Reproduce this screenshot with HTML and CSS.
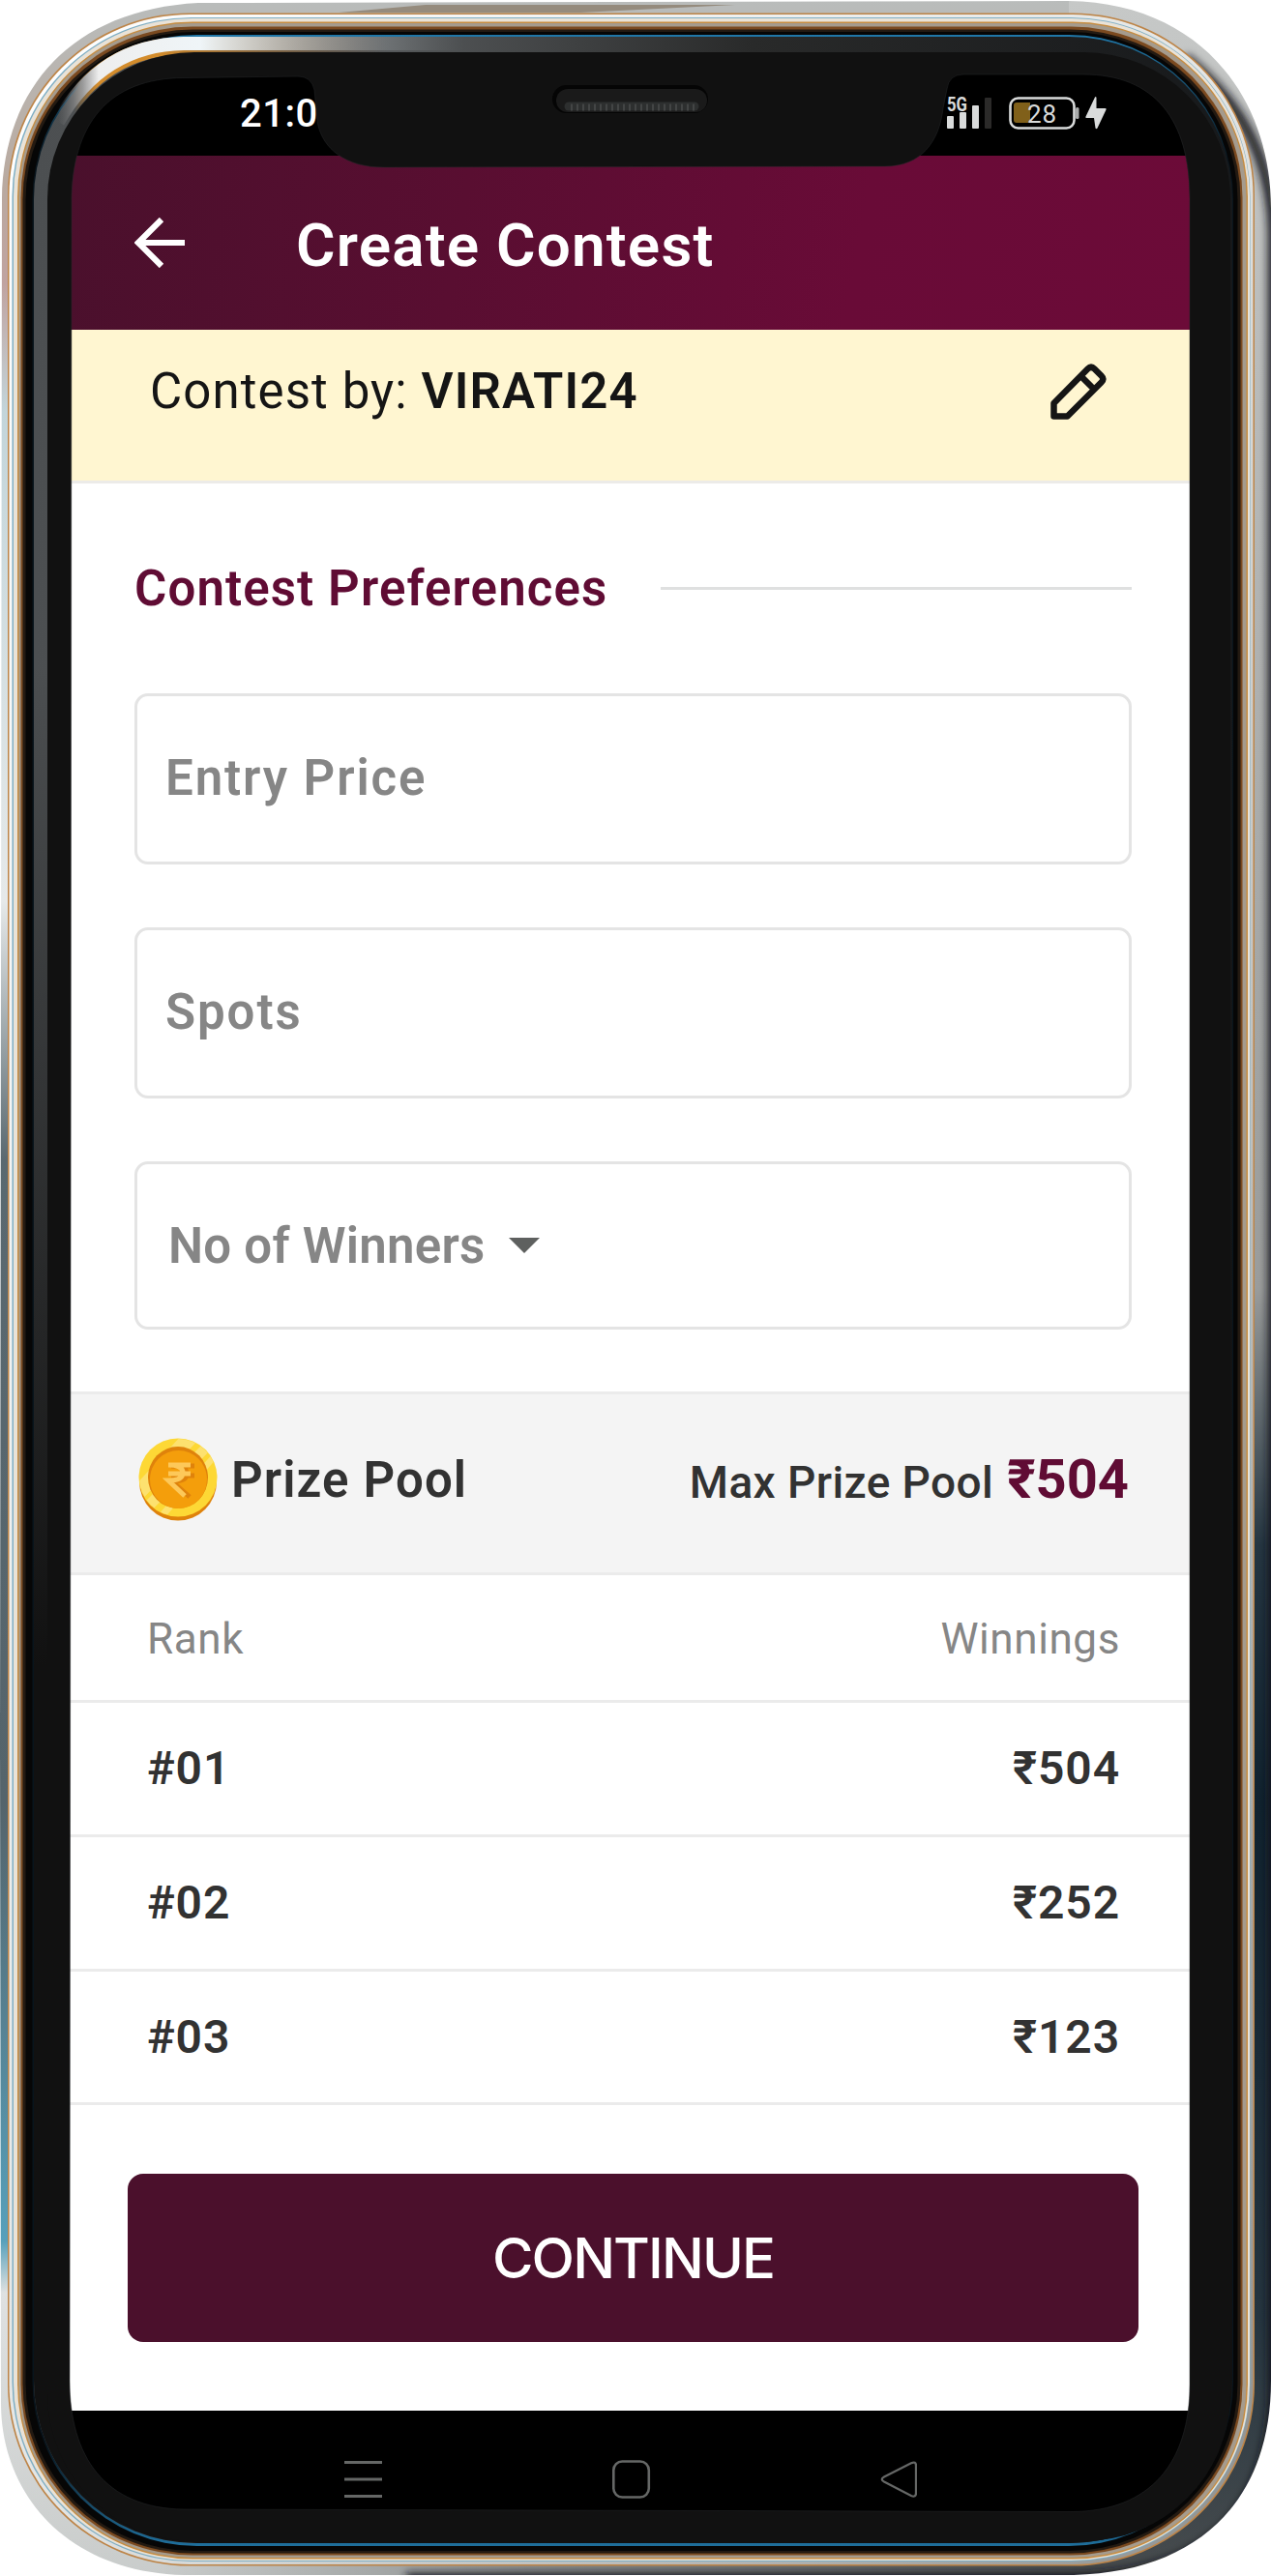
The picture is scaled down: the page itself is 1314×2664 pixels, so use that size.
FILE: index.html
```html
<!DOCTYPE html>
<html lang="en">
<head>
<meta charset="utf-8">
<title>Create Contest</title>
<link rel="stylesheet" href="styles.css">
</head>
<body>
<div class="phone">
  <main class="screen">
    <div class="status">
      <span class="clock">21:0</span>
      <div class="status-icons">
        <svg class="signal" width="48" height="38" viewBox="0 0 48 38">
          <text class="net" x="2" y="17" textLength="21" lengthAdjust="spacingAndGlyphs">5G</text>
          <g fill="#d9dbdb"><rect x="2" y="22" width="7" height="13" rx="1"/><rect x="15" y="18" width="7" height="17" rx="1"/><rect x="28" y="11" width="7" height="24" rx="1"/></g>
          <rect x="41" y="3" width="7" height="32" rx="1" fill="#2b2a29"/>
        </svg>
        <svg class="battery" width="74" height="34" viewBox="0 0 74 34">
          <rect x="1.500" y="1.500" width="66" height="31" rx="8" fill="none" stroke="#d9dbdb" stroke-width="2.600"/>
          <path d="M8 6h14v21H8a3 3 0 0 1-3-3V9a3 3 0 0 1 3-3z" fill="#80601a"/>
          <rect x="69" y="11" width="3.500" height="12" rx="1.500" fill="#a9abab"/>
          <text class="charge" x="19" y="26.500" textLength="30">28</text>
        </svg>
        <svg class="bolt" width="22" height="34" viewBox="0 0 22 34"><path d="M10 0.500 0.500 20.500Q0 22 1.500 22H9L10.500 32.500Q11.500 34 12.500 32.500L21.500 13.500Q22 12 20.500 12H11.500V1Q11-.5 10 .5z" fill="#d9dbdb"/></svg>
      </div>
    </div>
    <header class="appbar">
      <svg class="back" width="52" height="52" viewBox="0 0 52 52"><path d="M52 26H4M28 2 4 26l24 24" fill="none" stroke="#fff" stroke-width="6.200"/></svg>
      <h1 class="title">Create Contest</h1>
    </header>
    <section class="owner">
      <p class="owner-name">Contest by: <b>VIRATI24</b></p>
      <svg class="edit" width="58" height="58" viewBox="0 0 58 58"><path d="M3.500 54.500V41L38.500 5.500Q42 2 45.500 5.500L52.500 12.500Q56 16 52.500 19.500L17.500 54.500zM31.500 13 45 26.500" fill="none" stroke="#151515" stroke-width="6.500" stroke-linejoin="round"/></svg>
    </section>
    <section class="prefs">
      <h2 class="prefs-title">Contest Preferences</h2>
      <div class="field entry">Entry Price</div>
      <div class="field spots">Spots</div>
      <div class="field winners"><span>No of Winners</span><svg width="32" height="16" viewBox="0 0 32 16"><path d="M0 0h32L16 16z" fill="#5e605f"/></svg></div>
    </section>
    <section class="pool">
      <svg class="coin" width="82" height="86" viewBox="0 0 82 86">
        <defs><clipPath id="face"><circle cx="41" cy="41" r="40"/></clipPath></defs>
        <ellipse cx="41" cy="45" rx="40" ry="40.500" fill="#df820b"/>
        <circle cx="41" cy="41" r="40.500" fill="#fdd835"/>
        <g clip-path="url(#face)" fill="#fde16f"><path d="M46-4 64 0-2 70-6 52zM70 3 77 10 8 81 0 73z"/><path d="M79 14 83 19 26 84 20 80z"/></g>
        <ellipse cx="41" cy="41" rx="31" ry="32" fill="#df820b"/>
        <ellipse cx="41.500" cy="43" rx="29.500" ry="30" fill="#f49e0b"/>
        <g fill="none" stroke-width="5"><path d="M34 29h24M34 39h24M35 29q15 0 15 8 0 8-15 8L53 61" stroke="#df820b"/><path d="M31 28h23M31 37h23M31 28q15 0 15 8 0 8-15 8L48 60" stroke="#fdc859"/></g>
      </svg>
      <h2 class="pool-title">Prize Pool</h2>
      <p class="pool-max"><span class="pool-label">Max Prize Pool</span><b class="pool-sum">₹504</b></p>
    </section>
    <section class="ranks">
      <div class="row head"><span>Rank</span><span class="head-win">Winnings</span></div>
      <div class="row"><span>#01</span><span>₹504</span></div>
      <div class="row"><span>#02</span><span>₹252</span></div>
      <div class="row"><span>#03</span><span>₹123</span></div>
    </section>
    <div class="actions"><button class="continue" type="button">CONTINUE</button></div>
    <nav class="sysnav">
      <svg width="592" height="40" viewBox="0 0 592 40" fill="none" stroke="#656766">
        <path d="M0 2.500h39M0 20h39M0 37.500h39" stroke-width="3.200"/>
        <rect x="278.300" y="1.500" width="36.500" height="37" rx="9" stroke-width="2.600"/>
        <path d="M558 17.500 586 3.200Q591 1 591 6V34Q591 39 586 37L558 22.500Q553.500 20 558 17.500z" stroke-width="2.300"/>
      </svg>
    </nav>
  </main>
  <svg class="frame" width="1314" height="2664" viewBox="0 0 1314 2664">
    <defs>
      <path id="glass" d="M74 210C74 128 112 81 190 80.500L308 79Q322 79 325 93L328.500 128C334 154 357 173 397 173L915 172C952 172 971 147 975 112L979 92Q981 77 996 77L1120 77C1194 77 1230 124 1230 205V2466C1230 2546 1190 2597 1108 2597.500L190 2595C108 2594 72 2540 72 2462z"/>
      <mask id="hole" maskUnits="userSpaceOnUse" x="0" y="0" width="1314" height="2664"><rect width="1314" height="2664" fill="#fff"/><use href="#glass" fill="#000"/></mask>
      <mask id="body" maskUnits="userSpaceOnUse" x="0" y="0" width="1314" height="2664"><path d="M205 3 870 1.500 1105 1C1240 3 1314 100 1314 215V2462C1314 2585 1240 2660 1110 2663H190C70 2660 1 2580 1 2485L0 1800 2 205C4 90 75 10 205 3z" fill="#fff"/></mask>
      <filter id="soft" filterUnits="userSpaceOnUse" x="0" y="0" width="1400" height="2700"><feGaussianBlur stdDeviation="4"/></filter>
      <linearGradient id="shell" x1="0" y1="0" x2="0" y2="1"><stop offset="0" stop-color="#b9bcbb"/><stop offset=".07" stop-color="#b9aaa0"/><stop offset=".11" stop-color="#c0a3a0"/><stop offset=".16" stop-color="#c3d5da"/><stop offset=".35" stop-color="#e6e9e9"/><stop offset=".45" stop-color="#5a6970"/><stop offset=".7" stop-color="#55646b"/><stop offset=".87" stop-color="#57a0bb"/><stop offset=".89" stop-color="#dfe1e1"/><stop offset="1" stop-color="#c9cccb"/></linearGradient>
      <linearGradient id="right" x1="0" y1="0" x2="0" y2="2664" gradientUnits="userSpaceOnUse"><stop offset="0" stop-color="#c6c8c7"/><stop offset=".5" stop-color="#9a9c9b"/><stop offset=".6" stop-color="#253642"/><stop offset=".7" stop-color="#10222f"/><stop offset=".9" stop-color="#253540"/><stop offset="1" stop-color="#484c4e"/></linearGradient>
      <linearGradient id="bottom" x1="0" x2="1" y1="0" y2="0"><stop offset="0" stop-color="#c9cccb"/><stop offset=".4" stop-color="#8b8e8e"/><stop offset="1" stop-color="#484c4e"/></linearGradient>
      <linearGradient id="rim" x1="0" y1="0" x2="1" y2="1"><stop offset="0" stop-color="#fff"/><stop offset=".5" stop-color="#e3e5e4"/><stop offset="1" stop-color="#8f9190"/></linearGradient>
      <linearGradient id="inner" x1="0" x2="1" y1="0" y2="0"><stop offset="0" stop-color="#4c4f51"/><stop offset=".3" stop-color="#55585a"/><stop offset=".6" stop-color="#292a2a"/><stop offset="1" stop-color="#17191b"/></linearGradient>
      <linearGradient id="fadeDown" x1="0" x2="0" y1="0" y2="1"><stop offset=".25" stop-color="#111" stop-opacity="0"/><stop offset=".65" stop-color="#111"/></linearGradient>
      <linearGradient id="blue" x1="0" x2="0" y1="0" y2="1"><stop offset="0" stop-color="#2077a8"/><stop offset=".05" stop-color="#08141c"/><stop offset=".96" stop-color="#08141c"/><stop offset="1" stop-color="#1f6f9c"/></linearGradient>
      <linearGradient id="arc" x1="60" x2="480" y1="0" y2="0" gradientUnits="userSpaceOnUse"><stop offset="0" stop-color="#777" stop-opacity="0"/><stop offset=".06" stop-color="#999"/><stop offset=".1" stop-color="#eee"/><stop offset=".35" stop-color="#eff5f8"/><stop offset="1" stop-color="#8a9093" stop-opacity="0"/></linearGradient>
      <linearGradient id="amber" x1="60" x2="400" y1="0" y2="0" gradientUnits="userSpaceOnUse"><stop offset=".05" stop-color="#d38c2c" stop-opacity="0"/><stop offset=".12" stop-color="#d38c2c"/><stop offset=".3" stop-color="#d38c2c"/><stop offset="1" stop-color="#8a5c30" stop-opacity="0"/></linearGradient>
    </defs>
    <g mask="url(#hole)"><g mask="url(#body)">
      <rect width="1314" height="2664" fill="url(#shell)"/>
      <path d="M1105 0H1314V2664H1105z" fill="url(#right)"/>
      <rect x="170" y="2640" width="940" height="24" fill="url(#bottom)"/>
      <path d="M1225 60Q1314 130 1316 240V2480Q1310 2664 1110 2666H420" fill="none" stroke="#16191b" stroke-width="10" filter="url(#soft)"/>
      <path d="M440 5H760L600 13H350z" fill="#958b7d"/>
      <rect x="8" y="13.500" width="1289" height="2640" rx="188" fill="#bd8447"/>
      <rect x="9.500" y="15" width="1286" height="2637" rx="187" fill="url(#rim)"/>
      <rect x="12.500" y="18" width="1280" height="2631" rx="185" fill="#7eaec4"/>
      <rect x="14" y="19" width="1278" height="2629" rx="184" fill="#e9e2d7"/>
      <rect x="18" y="22.500" width="1272" height="2624" rx="181" fill="#c68c40"/>
      <rect x="19.500" y="24" width="1269" height="2621" rx="179" fill="#a59b8d"/>
      <rect x="21.500" y="27.500" width="1263" height="2615" rx="177" fill="#7b4a20"/>
      <rect x="23.500" y="30.500" width="1259" height="2610" rx="176" fill="#231a12"/>
      <rect x="26.500" y="33" width="1253" height="2605" rx="174" fill="#060606"/>
      <rect x="33.500" y="36" width="1241.500" height="2597" rx="170" fill="url(#blue)"/>
      <rect x="35" y="38" width="1239" height="2592" rx="168" fill="url(#inner)"/>
      <rect x="35" y="38" width="1239" height="2592" rx="168" fill="url(#fadeDown)"/>
      <path d="M60 128C85 84 125 48 190 47.500H480" fill="none" stroke="url(#amber)" stroke-width="18"/>
      <path d="M60 126C85 82 125 46 190 45H480" fill="none" stroke="url(#arc)" stroke-width="14"/>
      <rect x="49" y="54" width="1223" height="2574" rx="152" fill="#111"/>
      <rect x="571" y="88" width="161" height="29" rx="14.500" fill="#050505"/>
      <rect x="575" y="92" width="156" height="24" rx="12" fill="#1a1a1a"/>
      <path d="M588 110H718" stroke="#2d2f2f" stroke-width="9" stroke-linecap="round"/>
      <path d="M590 111H720" stroke="#434545" stroke-width="7" stroke-dasharray="2 4"/>
    </g></g>
    <use href="#glass" fill="none" stroke="#25282a" stroke-width="1" opacity=".5"/>
  </svg>
</div>
</body>
</html>
```
FILE: styles.css
```css
* { box-sizing: border-box; margin: 0; }
body { width: 1314px; background: #fff; font-family: Roboto, "Liberation Sans", sans-serif; overflow: hidden; }
.phone { position: relative; width: 1314px; height: 2664px; padding: 74px 84px 64px 72px; }
.frame { position: absolute; inset: 0; pointer-events: none; }
.screen { width: 1158px; height: 2526px; background: #fff; display: flex; flex-direction: column; }

.status { height: 87px; background: #000; display: flex; align-items: flex-start; justify-content: space-between; padding: 24px 86px 0 176px; }
.clock { color: #fff; font-size: 40px; font-weight: 500; line-height: 40px; letter-spacing: .5px; }
.status-icons { display: flex; align-items: flex-start; }
.signal { overflow: visible; }
.net { font: 700 21px Roboto, sans-serif; fill: #d9dbdb; }
.charge { font: 400 26px Roboto, sans-serif; fill: #d9dbdb; }
.battery { margin: 2px 0 0 18px; }
.bolt { margin: 2px 0 0 5px; }

.appbar { height: 180px; background: linear-gradient(100deg, #4a102c 0%, #590e31 35%, #690b37 70%, #6c0b38 100%); display: flex; align-items: center; padding-left: 67px; }
.title { color: #fff; font-size: 62px; font-weight: 600; line-height: 72px; letter-spacing: 1.2px; margin: 6px 0 0 115px; }

.owner { height: 159px; background: #fff6d1; border-bottom: 3px solid #ecebe8; display: flex; align-items: center; justify-content: space-between; padding: 0 86px 29px 83px; }
.owner-name { font-size: 51px; color: #151515; letter-spacing: 1.1px; white-space: nowrap; }
.owner-name b { font-weight: 600; }

.prefs { padding: 75px 60px 0 67px; height: 939px; }
.prefs-title { height: 67px; display: flex; align-items: center; gap: 55px; color: #600c34; font-size: 51px; font-weight: 600; letter-spacing: 1.1px; white-space: nowrap; }
.prefs-title::after { content: ""; flex: 1; height: 3px; background: #dfe0e0; }
.field { height: 177px; border: 3px solid #e4e4e4; border-radius: 14px; margin-bottom: 65px; display: flex; align-items: center; padding: 0 0 2px 29px; color: #868686; font-size: 51px; font-weight: 600; letter-spacing: 1.9px; }
.entry { margin-top: 75px; }
.winners { height: 174px; padding: 0 0 0 32px; gap: 24px; letter-spacing: .25px; }

.pool { height: 190px; background: #f4f4f4; border-top: 3px solid #ebebeb; border-bottom: 3px solid #ebebeb; display: flex; align-items: center; padding: 0 63px 8px 71px; color: #323232; }
.pool-title { font-size: 51px; font-weight: 600; margin-left: 14px; letter-spacing: 1.1px; }
.pool-max { display: flex; align-items: baseline; gap: 14px; margin-left: auto; }
.pool-label { font-size: 46px; font-weight: 500; letter-spacing: .4px; }
.pool-sum { font-size: 56px; font-weight: 700; color: #600c34; }

.row { height: 138.800px; border-bottom: 3px solid #ebebeb; display: flex; align-items: center; justify-content: space-between; padding: 0 72px 0 80px; font-size: 48px; font-weight: 600; color: #323232; letter-spacing: .9px; }
.head { height: 132px; padding-top: 2px; font-size: 44px; font-weight: 400; color: #868686; letter-spacing: .6px; }

.actions { padding: 70.600px 53px 71px 60px; }
.continue { display: block; width: 1045px; height: 174px; border: 0; border-radius: 16px; background: #4b102c; color: #fff; font: 550 58px Inter, sans-serif; letter-spacing: -1.900px; }
.sysnav { flex: 1; background: #000; padding: 51px 0 0 284px; }
.sysnav svg { display: block; }
```
